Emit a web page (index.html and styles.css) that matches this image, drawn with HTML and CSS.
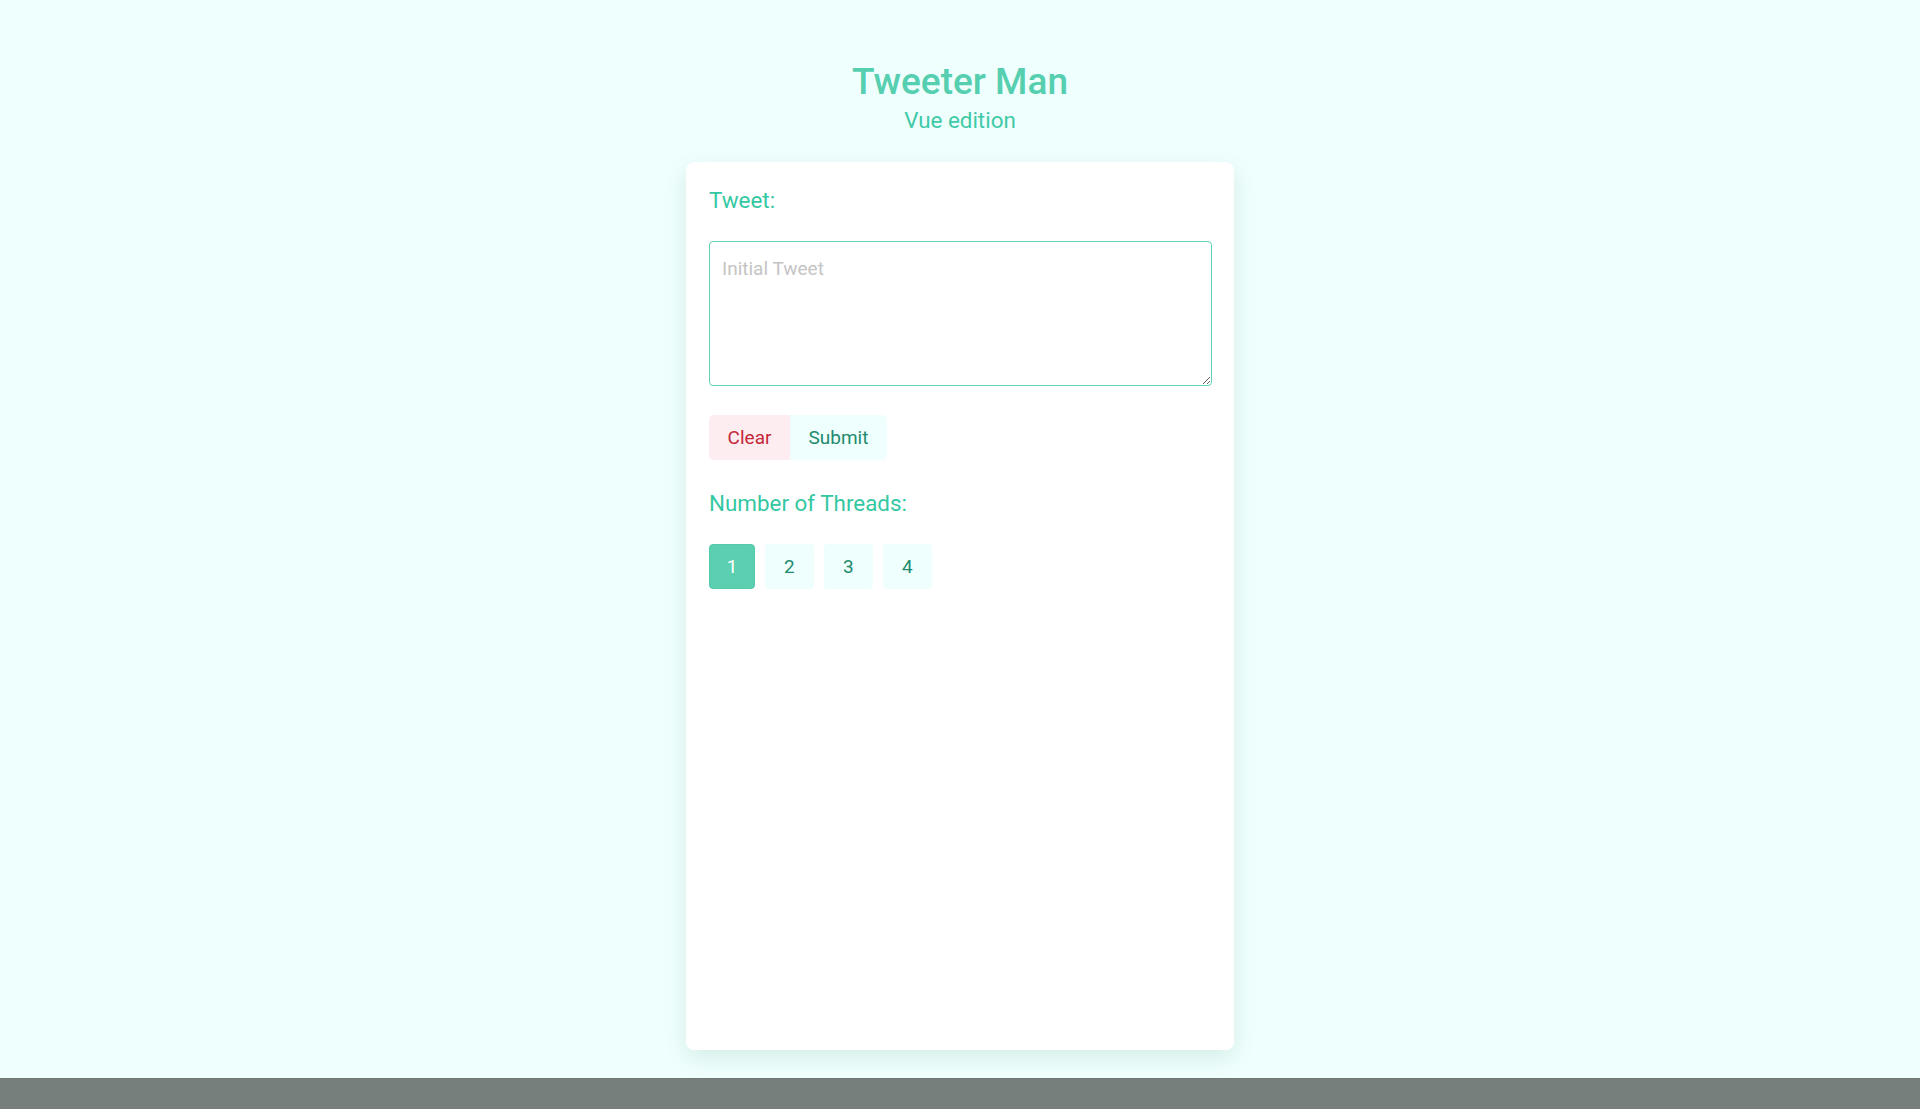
FILE: index.html
```html
<!DOCTYPE html>
<html lang="en">
<head>
<meta charset="utf-8">
<title>Tweeter Man</title>
<link rel="stylesheet" href="styles.css">
</head>
<body>
<div class="page">
  <header class="header">
    <h1 class="title">Tweeter Man</h1>
    <p class="subtitle">Vue edition</p>
  </header>
  <main class="card">
    <label class="label" for="tweet">Tweet:</label>
    <textarea id="tweet" class="tweet-input" placeholder="Initial Tweet"></textarea>
    <div class="actions">
      <button class="btn btn-clear">Clear</button>
      <button class="btn btn-submit">Submit</button>
    </div>
    <div class="label">Number of Threads:</div>
    <div class="threads">
      <button class="thread thread-active">1</button>
      <button class="thread">2</button>
      <button class="thread">3</button>
      <button class="thread">4</button>
    </div>
  </main>
</div>
<footer class="footer"></footer>
</body>
</html>
```

FILE: styles.css
```css
* { box-sizing: border-box; }
html, body { margin: 0; padding: 0; }
body {
  background: #effffd;
  font-family: Roboto, Inter, "Noto Sans", sans-serif;
  min-height: 1109px;
  display: flex;
  flex-direction: column;
}
.page {
  flex: 1;
  display: flex;
  flex-direction: column;
  align-items: center;
  padding-top: 60px;
}
.header { text-align: center; }
.title {
  margin: 0;
  font-size: 37px;
  line-height: 44px;
  font-weight: 500;
  color: #55cfb0;
}
.subtitle {
  margin: 2px 0 0;
  font-size: 22.4px;
  line-height: 28px;
  font-weight: 400;
  color: #3fcaa8;
}
.card {
  margin-top: 28px;
  width: 548px;
  height: 888px;
  background: #ffffff;
  border-radius: 8px;
  padding: 24px 23px 23px;
  display: flex;
  flex-direction: column;
  align-items: flex-start;
  box-shadow: 0 8px 22px rgba(40, 110, 100, 0.12);
}
.label {
  font-size: 22.4px;
  line-height: 28px;
  color: #33c8a2;
  font-weight: 400;
}
.tweet-input {
  margin-top: 27px;
  width: 503px;
  height: 145px;
  border: 1px solid #5fd3b5;
  border-radius: 4px;
  padding: 15px 12px 10px;
  font-family: Roboto, Inter, "Noto Sans", sans-serif;
  font-size: 19px;
  line-height: 24px;
  color: #333;
  outline: none;
}
.tweet-input::placeholder { color: #c4c4c4; }
.actions {
  margin-top: 29px;
  margin-bottom: 29px;
  display: flex;
}
.btn {
  height: 45px;
  border: none;
  padding: 0;
  font-family: Roboto, Inter, "Noto Sans", sans-serif;
  font-size: 19px;
  cursor: pointer;
}
.btn-clear {
  width: 81px;
  background: #fdedf0;
  color: #c3273a;
  border-radius: 5px 0 0 5px;
}
.btn-submit {
  width: 97px;
  background: #eefffd;
  color: #1f8a6d;
  border-radius: 0 5px 5px 0;
}
.threads {
  margin-top: 27px;
  display: flex;
  gap: 9.5px;
}
.thread {
  height: 45px;
  width: 49.5px;
  padding: 0;
  border: 1px solid transparent;
  border-radius: 4px;
  background: #eefffd;
  color: #1f8a6d;
  font-family: Roboto, Inter, "Noto Sans", sans-serif;
  font-size: 19px;
  cursor: pointer;
}
.thread-active {
  width: 46px;
  background: #5ccfb1;
  border-color: #52c9a9;
  color: #ffffff;
}
.footer {
  height: 31px;
  background: #777f7c;
  border-top: 1px solid #6e7874;
}
```
